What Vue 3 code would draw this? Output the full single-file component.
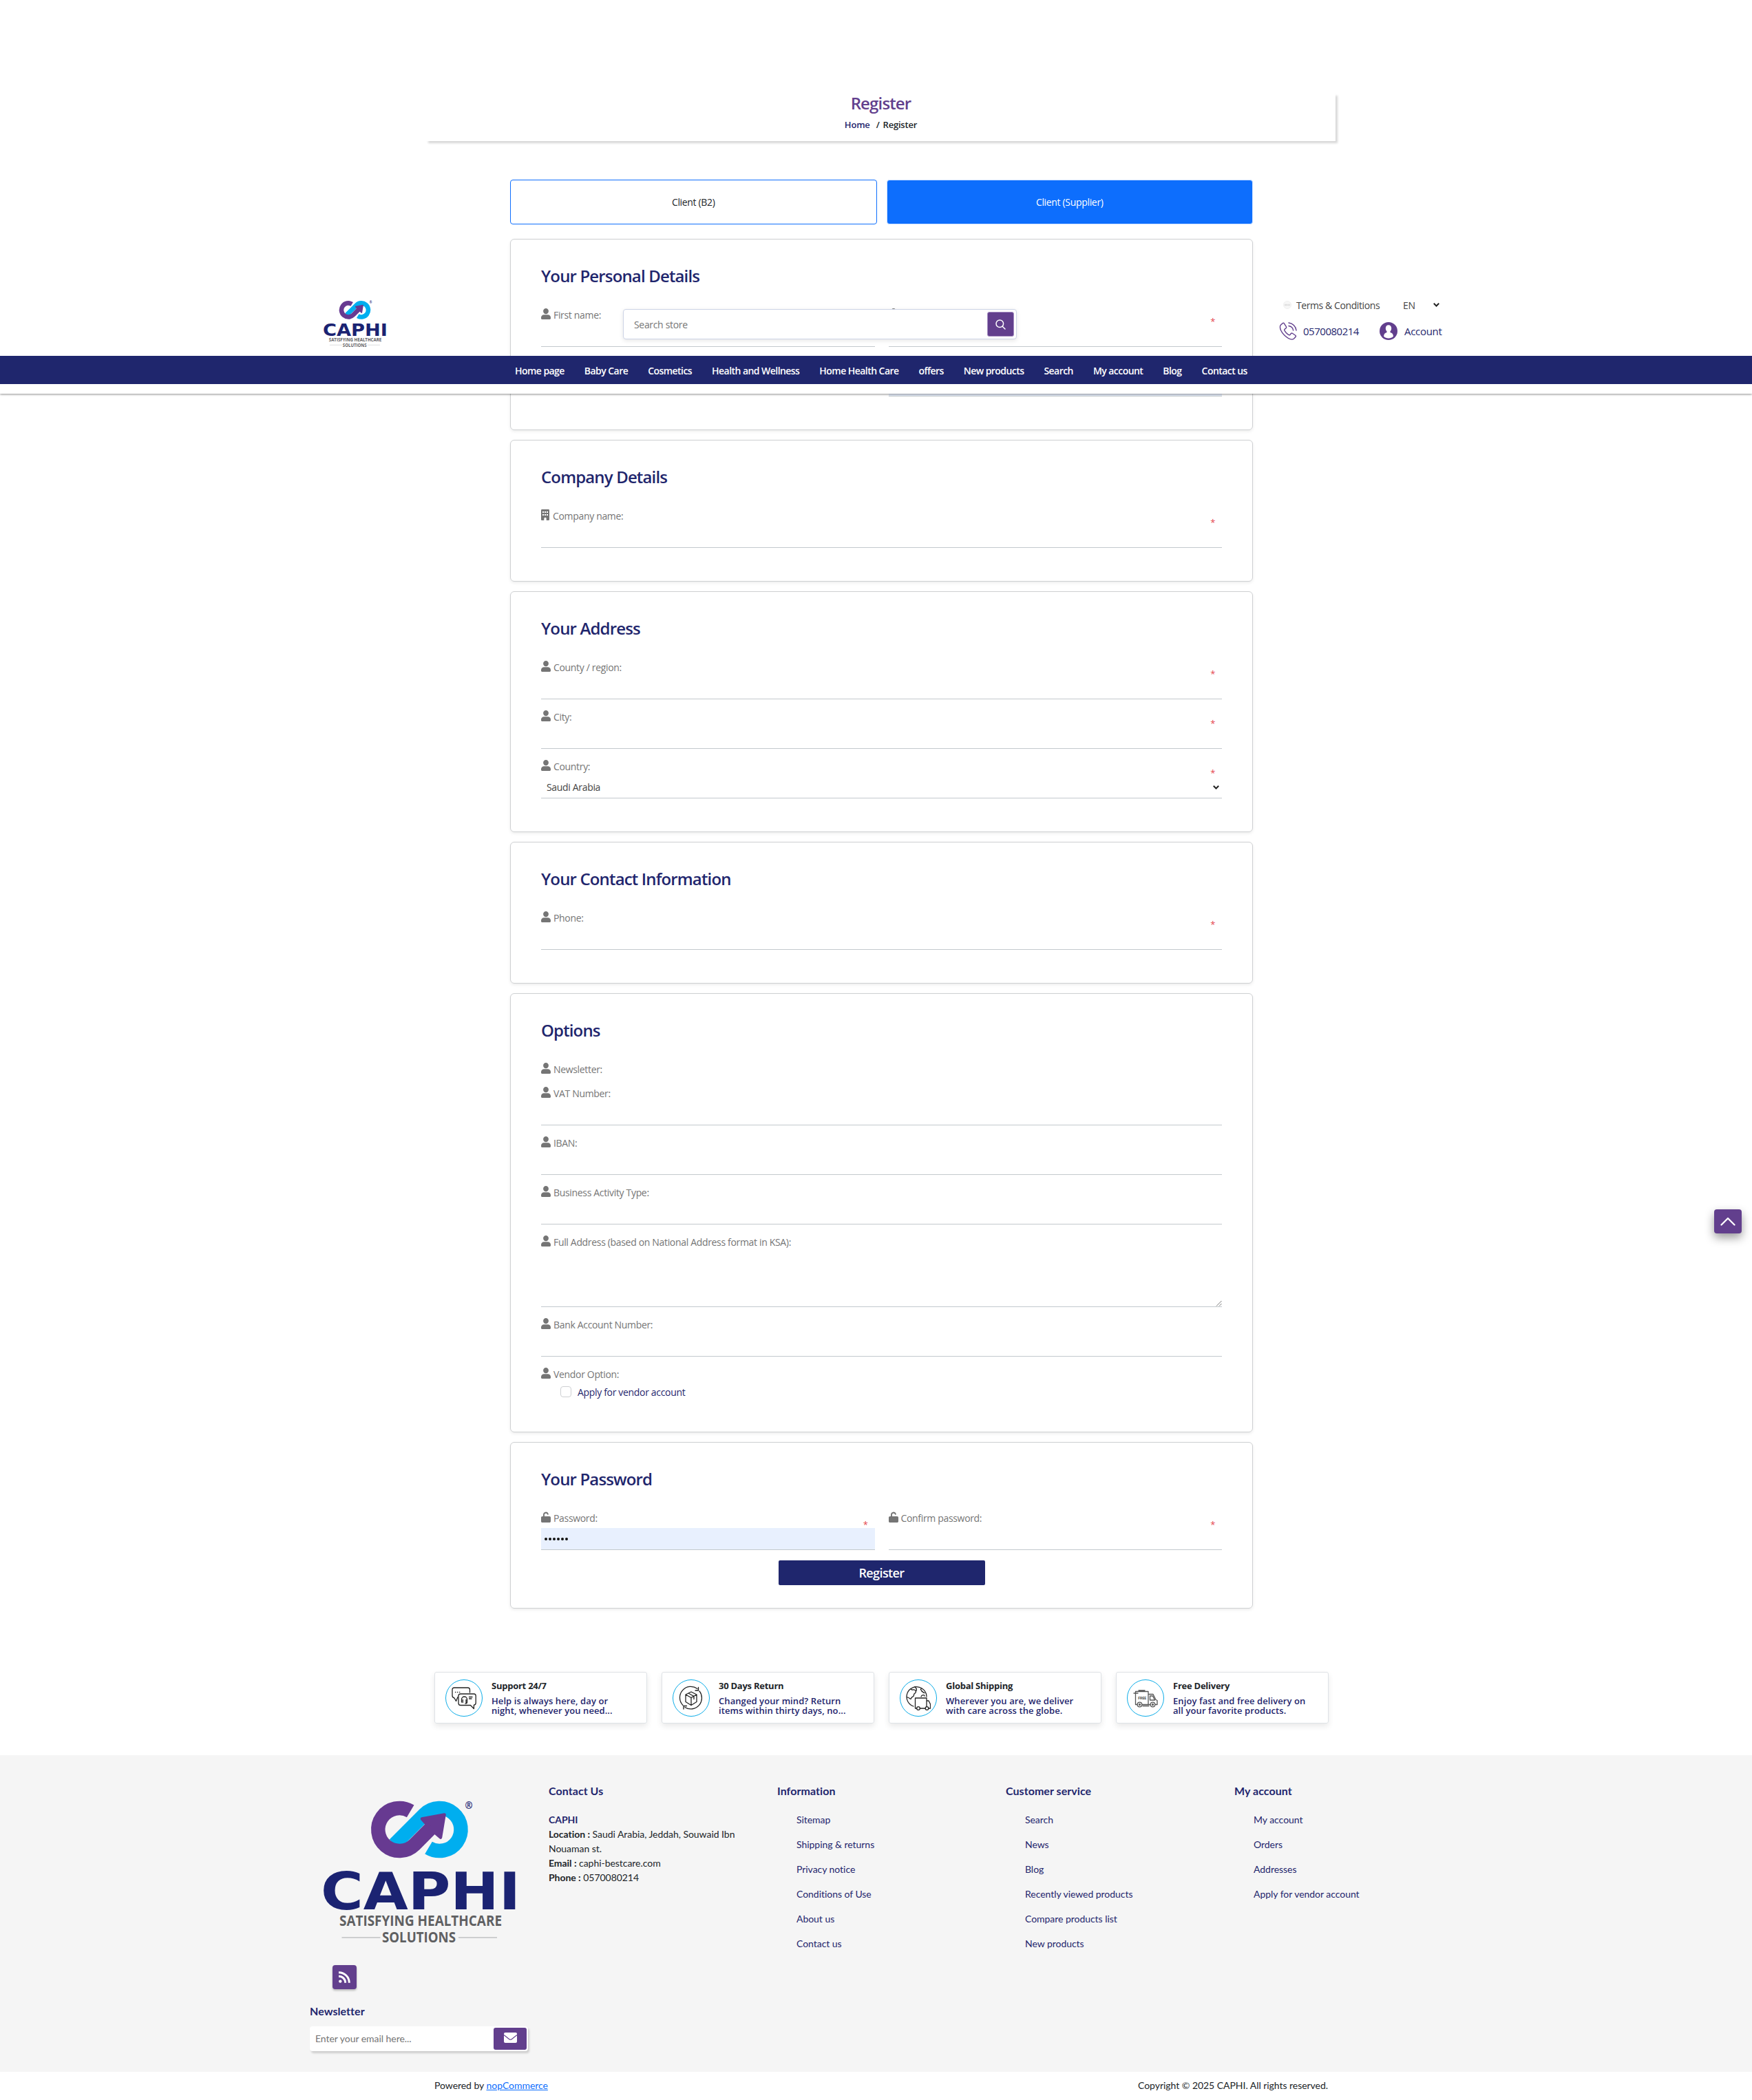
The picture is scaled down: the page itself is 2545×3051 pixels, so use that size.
<script setup>
import { h } from 'vue'

const nav = ['Home page', 'Baby Care', 'Cosmetics', 'Health and Wellness', 'Home Health Care', 'offers', 'New products', 'Search', 'My account', 'Blog', 'Contact us']

// Brand mark, used small in the header and large in the footer
const Logo = () => {
  const ring = (d, stroke) => h('path', { d, stroke, fill: 'none', 'stroke-width': 20.5 })
  const word = (text, x, y, textLength, size, fill, family) =>
    h('text', { x, y, textLength, fill, lengthAdjust: 'spacingAndGlyphs', 'font-size': size, 'font-weight': 700, 'font-family': family, 'letter-spacing': 0 }, text)
  return h('svg', { viewBox: '0 0 281 206', overflow: 'visible' }, [
    ring('M104 62.700L147.600 19.100A31 31 0 1 1 153.500 67.600', '#00aeef'),
    ring('M127.200 14.400A31 31 0 1 0 133.200 62.900L163 33', '#673a91'),
    h('path', { d: 'M176.500 19.500L144 25.500L151.500 34L164 46.500L171 52.500Z', fill: '#673a91', stroke: '#673a91', 'stroke-width': 4.5, 'stroke-linejoin': 'round' }),
    word('®', 206.5, 10.5, 11, 14, '#1b2372', 'Open Sans, sans-serif'),
    word('CAPHI', -3, 157, 290, 75, '#1b2372', 'DejaVu Sans, sans-serif'),
    word('SATISFYING HEALTHCARE', 24, 180.5, 236, 21, '#5f6062', 'Open Sans, sans-serif'),
    word('SOLUTIONS', 86, 205, 107, 21, '#5f6062', 'Open Sans, sans-serif'),
    h('path', { d: 'M27.500 198H83.500M197 198h56', stroke: '#a5a7aa', 'stroke-width': 1.2 }),
  ])
}

const cards = [
  { title: 'Company Details', fields: [{ label: 'Company name:', icon: 'building', required: true }] },
  {
    title: 'Your Address',
    fields: [
      { label: 'County / region:', required: true },
      { label: 'City:', required: true },
      { label: 'Country:', required: true, type: 'select', value: 'Saudi Arabia' },
    ],
  },
  { title: 'Your Contact Information', fields: [{ label: 'Phone:', required: true }] },
  {
    title: 'Options',
    fields: [
      { label: 'Newsletter:', type: 'none' },
      { label: 'VAT Number:' },
      { label: 'IBAN:' },
      { label: 'Business Activity Type:' },
      { label: 'Full Address (based on National Address format in KSA):', type: 'area' },
      { label: 'Bank Account Number:' },
      { label: 'Vendor Option:', type: 'check', value: 'Apply for vendor account' },
    ],
  },
]

const icons = {
  user: { box: '0 0 14 16', d: 'M7 0a3.9 3.9 0 0 1 3.9 4c0 2.3-1.7 4.3-3.9 4.3S3.100 6.300 3.100 4A3.900 3.900 0 0 1 7 0zM4.200 9.300h5.600A4.200 4.200 0 0 1 14 13.500v1.100c0 .8-.6 1.400-1.400 1.400H1.400C.6 16 0 15.400 0 14.600v-1.100a4.200 4.200 0 0 1 4.200-4.200z' },
  building: { box: '0 0 12 16', d: 'M1.300 0h9.400C11.400 0 12 .6 12 1.300v13.400c0 .7-.6 1.300-1.300 1.300H7.700v-2.600a1.700 1.700 0 0 0-3.400 0V16h-3C.6 16 0 15.400 0 14.700V1.300C0 .6.6 0 1.300 0zM2 3v2h2V3zm3 0v2h2V3zm3 0v2h2V3zM2 7v2h2V7zm3 0v2h2V7zm3 0v2h2V7z' },
  lock: { box: '0 0 14 16', d: 'M3 7V4.600a4 4 0 0 1 7.800-1.200l.2.800-1.800.6-.3-.8A2.100 2.100 0 0 0 4.900 4.600V7h7.300c1 0 1.800.8 1.800 1.800v5.400c0 1-.8 1.800-1.800 1.800H1.800C.8 16 0 15.200 0 14.200V8.800C0 7.800.8 7 1.800 7z' },
}

const services = [
  { icon: 'support', title: 'Support 24/7', lines: ['Help is always here, day or', 'night, whenever you need...'] },
  { icon: 'return', title: '30 Days Return', lines: ['Changed your mind? Return', 'items within thirty days, no...'] },
  { icon: 'globe', title: 'Global Shipping', lines: ['Wherever you are, we deliver', 'with care across the globe.'] },
  { icon: 'truck', title: 'Free Delivery', lines: ['Enjoy fast and free delivery on', 'all your favorite products.'] },
]

const columns = [
  { title: 'Information', links: ['Sitemap', 'Shipping & returns', 'Privacy notice', 'Conditions of Use', 'About us', 'Contact us'] },
  { title: 'Customer service', links: ['Search', 'News', 'Blog', 'Recently viewed products', 'Compare products list', 'New products'] },
  { title: 'My account', links: ['My account', 'Orders', 'Addresses', 'Apply for vendor account'] },
]
</script>

<template>
  <div class="page">
    <header class="top">
      <div class="top-row">
        <Logo class="logo-small" />
        <div class="search">
          <span>Search store</span>
          <button>
            <svg width="15" height="15" viewBox="0 0 15 15" fill="none" stroke="#fff" stroke-width="1.500" stroke-linecap="round"><circle cx="6.300" cy="6.300" r="5.300" /><path d="M10.200 10.200L14 14" /></svg>
          </button>
        </div>
        <div class="tools">
          <div class="tools-line first">
            <svg class="term" width="12" height="12" viewBox="0 0 12 12"><circle cx="6" cy="6" r="5.500" fill="#f7f7f7" stroke="#efefef" /><path d="M2 6h8" stroke="#dcdcdc" stroke-width="2.500" stroke-dasharray="1.800 .5" /></svg>
            <span class="terms">Terms &amp; Conditions</span>
            <span class="lang">EN</span>
            <svg width="9" height="6" viewBox="0 0 9 6" fill="none" stroke="#222" stroke-width="2"><path d="M.8.800L4.500 4.500 8.200.8" /></svg>
          </div>
          <div class="tools-line second">
            <svg width="26" height="26" viewBox="0 0 26 26" fill="none" stroke="#623f8d" stroke-width="1.400" stroke-linejoin="round" stroke-linecap="round">
              <path d="M5.300 1.600L2.300 4.200C-.4 8.500 4 15.500 8 19.300c4.300 4 9.800 7.600 13.600 4.700l2.500-2.700c.6-.8.3-1.500-.4-2l-4.300-3c-.8-.5-1.500-.3-2 .2l-1.600 2c-.7.600-1.500.3-2.200-.2-2.400-1.600-4.300-3.600-5.600-6-.4-.8-.5-1.500.2-2.100l2-1.600c.6-.6.600-1.300.2-2L7.300 1.800c-.5-.8-1.300-.9-2-.2z" />
              <path d="M14 1c5.800.7 10.200 5.200 11 11M14 5.500c3.600.5 6.100 3 6.600 6.500" />
            </svg>
            <span class="tel">0570080214</span>
            <svg width="26" height="26" viewBox="0 0 26 26"><circle cx="13" cy="13" r="13" fill="#623f8d" /><path d="M13 4.300c2.500 0 4.200 2 4.200 4.600 0 1.900-.7 3.400-1.700 4.500-.5 1 .1 1.600 1.400 2.200 2 1 3 2.600 3 5.200-1.700 1.700-4.200 2.600-6.900 2.600s-5.200-.9-6.900-2.600c0-2.600 1-4.200 3-5.200 1.300-.6 1.900-1.200 1.400-2.200-1-1.100-1.700-2.600-1.700-4.500 0-2.600 1.700-4.600 4.200-4.600z" fill="#fff" /></svg>
            <span class="account">Account</span>
          </div>
        </div>
      </div>
      <nav><a v-for="n in nav" :key="n">{{ n }}</a></nav>
      <div class="under"></div>
    </header>

    <section class="title-box">
      <h1>Register</h1>
      <p><a>Home</a><span class="slash">/</span><strong>Register</strong></p>
    </section>

    <main>
      <div class="tabs">
        <div class="tab">Client (B2)</div>
        <div class="tab active">Client (Supplier)</div>
      </div>

      <section class="card">
        <h2>Your Personal Details</h2>
        <div class="pair">
          <div class="field">
            <label><svg class="ic" viewBox="0 0 14 16"><path :d="icons.user.d" /></svg>First name:</label>
            <div class="input"></div>
          </div>
          <div class="field">
            <label><svg class="ic" viewBox="0 0 14 16"><path :d="icons.user.d" /></svg></label>
            <div class="input"></div>
            <i class="star">*</i>
          </div>
          <div class="field"></div>
          <div class="field">
            <label></label>
            <div class="input filled"></div>
          </div>
        </div>
      </section>

      <section v-for="c in cards" :key="c.title" class="card">
        <h2>{{ c.title }}</h2>
        <div v-for="f in c.fields" :key="f.label" class="field" :class="f.type">
          <label>
            <svg class="ic" :class="f.icon" :viewBox="icons[f.icon || 'user'].box"><path :d="icons[f.icon || 'user'].d" fill-rule="evenodd" /></svg>{{ f.label }}
          </label>
          <div v-if="f.type === 'select'" class="input choice">
            {{ f.value }}
            <svg width="9" height="6" viewBox="0 0 9 6" fill="none" stroke="#222" stroke-width="2"><path d="M.8.800L4.500 4.500 8.200.8" /></svg>
          </div>
          <div v-else-if="f.type === 'check'" class="check"><span class="box"></span>{{ f.value }}</div>
          <div v-else-if="f.type === 'area'" class="input area">
            <svg width="9" height="9" viewBox="0 0 9 9" stroke="#555" stroke-width=".8"><path d="M1 8.500L8.500 1M5 8.500L8.500 5" /></svg>
          </div>
          <div v-else-if="f.type !== 'none'" class="input"></div>
          <i v-if="f.required" class="star">*</i>
        </div>
      </section>

      <section class="card last">
        <h2>Your Password</h2>
        <div class="pair">
          <div class="field">
            <label><svg class="ic" viewBox="0 0 14 16"><path :d="icons.lock.d" /></svg>Password:</label>
            <div class="input filled dots"><b v-for="n in 6" :key="n"></b></div>
            <i class="star">*</i>
          </div>
          <div class="field">
            <label><svg class="ic" viewBox="0 0 14 16"><path :d="icons.lock.d" /></svg>Confirm password:</label>
            <div class="input"></div>
            <i class="star">*</i>
          </div>
        </div>
        <button class="submit">Register</button>
      </section>
    </main>

    <section class="services">
      <article v-for="s in services" :key="s.title">
        <div class="ring">
          <svg viewBox="0 0 36 36" width="36" height="36" fill="none" stroke="#222" stroke-width="1.300" stroke-linejoin="round" stroke-linecap="round">
            <template v-if="s.icon === 'support'">
              <path d="M9 16.500L6.500 22.500 4 18C2 17.500 1 16.500 1 14.500V6c0-2 1-3 3-3h19.500c2 0 3 1 3 3v4" />
              <path d="M13 12h19.500c1.800 0 2.700 1 2.700 3v10c0 2-1 3-2.800 3.200V33.500L27.500 28.500H13c-2 0-3-1-3-3V15c0-2 1-3 3-3z" />
              <path d="M14.500 21.500v-1.500a4 4 0 0 1 8 0v4c0 1.300-1 2-2.500 2M14.500 20v4M16.300 20.500v4M21 20.500v4M25.500 16.500h4.500M25.500 19h3.500M5.500 9.500h.3M8.500 9.500h.3M11.500 9.500h.3" />
            </template>
            <template v-else-if="s.icon === 'return'">
              <path d="M6 28.500A16 16 0 0 1 27 4.500M30 8a16 16 0 0 1-21 23.500" />
              <path d="M28.500 2.500v4.500h-4.500M7 34v-4.500h4.500" />
              <path d="M18 9l8 4v10.500l-8 5-8-5V13zM10 13l8 4.500L26 13M18 17.500v11M14 11l8 4.500v4" />
            </template>
            <template v-else-if="s.icon === 'globe'">
              <path d="M11 30A14.500 14.500 0 1 1 30 16M7 4.500c1 4 5-1 7 3s-3 3-2.500 6-3.500 2-4 5-3-2-6-1.500M13 1.500c2 2 3 4 2 6M22 4.500c-2 2 2 2 1 4 2 0 2 2 4 2M22 16c1-3 5-3 5-1" />
              <path d="M13.500 18h16.500v15H13.500zM30 22h3l2.500 5v6H30" fill="#fff" /><circle cx="18" cy="33" r="2.300" fill="#fff" /><circle cx="30.500" cy="33" r="2.300" fill="#fff" />
            </template>
            <g v-else stroke="#555">
              <path d="M6 27.500H3.500V8.500H22V27.500H13M22 12.500h7l4 8 2 1v6h-2.500M24.500 15h4l3 6h-7zM8 7h9M1 11h6M14 29.500h9M22 27.500h3" />
              <circle cx="9.500" cy="27.500" r="3.300" fill="#fff" /><circle cx="9.500" cy="27.500" r="1" /><circle cx="28.500" cy="27.500" r="3.300" fill="#fff" /><circle cx="28.500" cy="27.500" r="1" />
              <text x="7" y="19.500" class="free" textLength="12">FREE</text>
            </g>
          </svg>
        </div>
        <div>
          <h3>{{ s.title }}</h3>
          <p v-for="l in s.lines" :key="l">{{ l }}</p>
        </div>
      </article>
    </section>

    <footer>
      <div class="cols">
        <div class="brand">
          <Logo class="logo-big" />
          <a class="rss"><svg width="17" height="17" viewBox="0 0 17 17" fill="none" stroke="#fff" stroke-width="3"><circle cx="2.300" cy="14.600" r="2.200" fill="#fff" stroke="none" /><path d="M0 7.200a9.300 9.300 0 0 1 9.600 9.600M0 1.700A15 15 0 0 1 15.300 16.800" /></svg></a>
          <h4>Newsletter</h4>
          <div class="mail">
            <span>Enter your email here...</span>
            <button><svg width="19" height="15" viewBox="0 0 19 15"><rect width="19" height="15" rx="2" fill="#fff" /><path d="M0 3.500l7.500 6c1.200.9 2.800.9 4 0l7.500-6" fill="none" stroke="#623f8d" stroke-width="1.200" /></svg></button>
          </div>
        </div>
        <div class="contact">
          <h4>Contact Us</h4>
          <p class="name">CAPHI</p>
          <p><b>Location :</b> Saudi Arabia, Jeddah, Souwaid Ibn Nouaman st.</p>
          <p><b>Email :</b> caphi-bestcare.com</p>
          <p><b>Phone :</b> 0570080214</p>
        </div>
        <div v-for="c in columns" :key="c.title" class="col">
          <h4>{{ c.title }}</h4>
          <ul><li v-for="l in c.links" :key="l">{{ l }}</li></ul>
        </div>
      </div>
      <div class="legal">
        <span>Powered by <a>nopCommerce</a></span>
        <span>Copyright © 2025 CAPHI. All rights reserved.</span>
      </div>
    </footer>

    <a class="to-top"><svg width="22" height="13" viewBox="0 0 22 13" fill="none" stroke="#fff" stroke-width="2.300" stroke-linecap="round" stroke-linejoin="round"><path d="M1.500 11.500L11 2l9.500 9.500" /></svg></a>
  </div>
</template>

<style>
body { margin: 0; background: #fff; }
</style>

<style scoped>
* { box-sizing: border-box; }
h1, h2, h3, h4, p, ul { margin: 0; padding: 0; }
.page {
  position: relative;
  width: 2545px;
  height: 3051px;
  overflow: hidden;
  display: flex;
  flex-direction: column;
  font-family: "Open Sans", "Noto Sans", sans-serif;
  font-size: 14px;
  letter-spacing: -0.33px;
  color: #212529;
}
.page > * { flex: none; }

/* sticky header, floats over the form */
.top { position: absolute; z-index: 5; top: 430px; left: 0; width: 100%; }
.top-row { height: 87px; display: flex; align-items: flex-start; padding-left: 470px; }
.logo-small { width: 91px; height: 67px; margin-top: 7px; }
.search {
  width: 572px; height: 44px; margin: 19px 0 0 344px; padding: 0 3px 0 15px;
  display: flex; align-items: center; justify-content: space-between;
  background: #fff; border: 1px solid #cdd4e6; border-radius: 4px; box-shadow: 0 2px 6px rgba(0, 0, 0, .1);
  color: #757575;
}
.search button { width: 39px; height: 36px; padding: 0; border: 1px solid #a68fc2; border-radius: 3px; background: #623f8d; display: flex; align-items: center; justify-content: center; }
.tools { margin: 0 0 0 381px; }
.tools-line { display: flex; align-items: center; }
.first { height: 26px; color: #444; padding-left: 6px; }
.terms { margin-left: 7px; width: 155px; letter-spacing: -0.410px; }
.lang { width: 44px; }
.second { height: 26px; margin-top: 12px; font-size: 15px; color: #1f266d; letter-spacing: -0.480px; }
.tel { margin: 0 0 0 9px; width: 111px; }
.account { margin-left: 10px; letter-spacing: -0.300px; }
nav {
  height: 41px; padding: 1px 733px 0 748px; background: #1f266d; color: #fff;
  display: flex; align-items: center; justify-content: space-between;
  font-weight: 600; letter-spacing: -0.550px;
}
.under { height: 14px; background: #fff; box-shadow: 0 1px 3px rgba(0, 0, 0, .45); clip-path: inset(0 0 -6px 0); }

.title-box {
  width: 1321px; height: 69px; margin: 136px 0 0 619px; text-align: center;
  box-shadow: 3px 3px 3px rgba(0, 0, 0, .16); clip-path: inset(0 -8px -8px 0);
}
h1 { font-size: 24px; font-weight: 600; line-height: 28px; letter-spacing: -0.850px; color: #623f8d; }
.title-box p { font-size: 13px; font-weight: 600; line-height: 20px; margin-top: 7px; letter-spacing: -0.200px; }
.title-box p a { color: #1f266d; }
.title-box strong { font-weight: 600; }
.slash { margin: 0 5px 0 9px; }

main { width: 1079px; margin: 56px 0 0 741px; display: flex; flex-direction: column; gap: 14px; }
.tabs { display: flex; gap: 14px; margin-bottom: 7px; }
.tab { flex: 1; height: 65px; display: flex; align-items: center; justify-content: center; border: 1px solid #0d6efd; border-radius: 4px; }
.tab.active { background: #0d6efd; border-color: #cfe2ff; color: #fff; }
.card { border: 1px solid #ced0d2; border-radius: 6px; padding: 35px 44px 32px; box-shadow: 0 2px 4px rgba(0, 0, 0, .075); }
h2 { font-size: 24px; font-weight: 600; line-height: 36px; margin-bottom: 29px; letter-spacing: -0.850px; color: #1f266d; }
.field { position: relative; height: 56px; margin-bottom: 16px; }
.field.none { height: 20px; margin-bottom: 15px; }
.field.area { height: 104px; }
.field.check { height: 45px; }
label { display: flex; height: 20px; line-height: 20px; color: #757575; white-space: pre; }
.ic { width: 14px; height: 16px; margin: 0 4px 0 0; fill: #757575; flex: none; }
.ic.building { width: 12px; margin-right: 5px; }
.input { height: 32px; margin-top: 4px; border-bottom: 1px solid #c3c9cd; }
.filled { background: #e8f0fe; }
.area .area { height: 80px; display: flex; align-items: flex-end; justify-content: flex-end; }
.choice { display: flex; align-items: center; justify-content: space-between; padding: 0 4px 0 8px; color: #444; }
.check .check { display: flex; align-items: center; height: 16px; margin: 7px 0 0 28px; color: #1f266d; }
.box { width: 16px; height: 16px; margin-right: 9px; border: 1px solid #ced0d2; border-radius: 4px; }
.star { position: absolute; right: 10px; top: 9px; font-style: normal; font-size: 13px; line-height: 20px; color: #e4434b; }
.pair { display: grid; grid-template-columns: 1fr 1fr; column-gap: 20px; }
.last { padding-bottom: 33px; }
.last .field { margin-bottom: 15px; }
.dots { display: flex; align-items: center; gap: 2px; padding-left: 5px; }
.dots b { width: 4px; height: 4px; border-radius: 50%; background: #111; }
.submit { display: block; width: 300px; height: 36px; margin: 0 auto; border: 0; border-radius: 2px; background: #1f266d; color: #fff; font: 600 18px/36px "Open Sans", sans-serif; letter-spacing: -0.600px; padding: 0; }

.services { width: 1299px; margin: 92px 0 0 631px; display: flex; gap: 21px; }
article { width: 309px; height: 75px; padding: 0 0 0 15px; display: flex; align-items: center; border: 1px solid #dee2e6; border-radius: 3px; box-shadow: 0 4px 8px rgba(0, 0, 0, .09); }
.ring { width: 54px; height: 54px; margin-right: 13px; border: 1px solid #0aace8; border-radius: 50%; display: flex; align-items: center; justify-content: center; }
.free { font: 700 6px "Open Sans", sans-serif; fill: #555; stroke: none; }
h3 { font-size: 13px; font-weight: 700; line-height: 18px; letter-spacing: -0.250px; margin: -2px 0 6px; }
article p { font-size: 13px; font-weight: 600; line-height: 14px; height: 14px; letter-spacing: 0.080px; color: #1f266d; white-space: nowrap; }

footer { margin-top: 46px; font-family: Lato, sans-serif; letter-spacing: -0.040px; color: #212529; }
.cols { height: 460px; background: #f5f5f5; display: flex; padding: 42px 0 0 450px; }
.brand { width: 347px; }
.logo-big { display: block; width: 281px; height: 206px; margin: 25px 0 0 19px; }
.rss { display: flex; align-items: center; justify-content: center; width: 35px; height: 35px; margin: 32px 0 0 33px; border-radius: 4px; background: #623f8d; box-shadow: 0 2px 3px rgba(0, 0, 0, .25); }
h4 { font-size: 16px; font-weight: 700; line-height: 20px; color: #1f266d; letter-spacing: 0.060px; }
.brand h4 { margin-top: 22px; }
.mail { width: 317px; height: 36px; margin-top: 12px; padding: 0 2px 0 8px; display: flex; align-items: center; justify-content: space-between; background: #fff; border-radius: 4px; box-shadow: 2px 3px 3px rgba(0, 0, 0, .16); color: #757575; }
.mail span { padding-bottom: 2px; }
.mail button { width: 48px; height: 32px; padding: 0 0 3px; border: 0; border-radius: 3px; background: #623f8d; display: flex; align-items: center; justify-content: center; }
.contact { width: 332px; }
.contact h4, .col h4 { margin-bottom: 21px; }
.contact p { width: 280px; line-height: 21px; }
.contact .name { font-weight: 700; color: #1f266d; }
.col { width: 332px; }
ul { list-style: none; padding-left: 28px; }
li { line-height: 21px; margin-bottom: 15px; color: #1f266d; }
.legal { height: 41px; padding-bottom: 2px; margin: 0 616px 0 631px; display: flex; align-items: center; justify-content: space-between; }
.legal a { color: #0d6efd; text-decoration: underline; }

.to-top { position: absolute; left: 2490px; top: 1757px; width: 40px; height: 35px; display: flex; align-items: center; justify-content: center; border-radius: 4px; background: #623f8d; box-shadow: 0 6px 14px rgba(0, 0, 0, .4); }
</style>
